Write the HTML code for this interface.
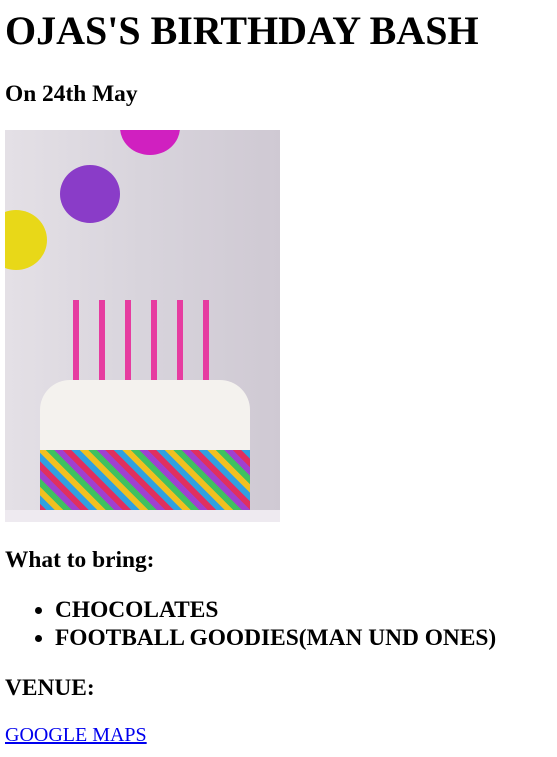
<html><head><style>
body{margin:0;font-family:"Liberation Serif",serif;background:#fff;position:relative;width:557px;height:757px;overflow:hidden}
.a{position:absolute;white-space:nowrap;font-weight:bold;margin:0}
h1.a{font-size:40px;left:5px;top:8px;line-height:46px}
.h3{font-size:23.4px;line-height:24px}
ul{position:absolute;left:0;top:596px;margin:0;padding-left:55px;font-size:23.4px;font-weight:bold;line-height:28px}
a{position:absolute;left:5px;top:723px;font-size:20px;color:#0000ee;line-height:24px}
.img{position:absolute;left:5px;top:130px;width:275px;height:392px;background:linear-gradient(90deg,#e4e0e6,#d8d4dc 50%,#cfc9d3);overflow:hidden}
.c{position:absolute;border-radius:50%}
</style></head><body>
<h1 class="a">OJAS'S BIRTHDAY BASH</h1>
<div class="a h3" style="left:5px;top:82px">On 24th May</div>
<div class="img">
<div class="c" style="left:115px;top:-30px;width:60px;height:55px;background:#d020c0"></div>
<div class="c" style="left:55px;top:35px;width:60px;height:58px;background:#8a3cc8"></div>
<div class="c" style="left:-20px;top:80px;width:62px;height:60px;background:#e8d818"></div>
<div style="position:absolute;left:60px;top:170px;width:160px;height:90px;background:repeating-linear-gradient(90deg,transparent 0 8px,#e63ca0 8px 14px,transparent 14px 26px)"></div>
<div style="position:absolute;left:35px;top:250px;width:210px;height:142px;background:#f4f2ee;border-radius:30px 30px 0 0"></div>
<div style="position:absolute;left:35px;top:320px;width:210px;height:62px;background:repeating-linear-gradient(45deg,#e03060 0 6px,#30a0e0 6px 12px,#f0c020 12px 18px,#40c060 18px 24px,#a040d0 24px 30px)"></div>
<div style="position:absolute;left:0;top:380px;width:275px;height:12px;background:#eeeaf0"></div>
</div>
<div class="a h3" style="left:5px;top:548px">What to bring:</div>
<ul><li>CHOCOLATES</li><li>FOOTBALL GOODIES(MAN UND ONES)</li></ul>
<div class="a h3" style="left:5px;top:676px">VENUE:</div>
<a href="#">GOOGLE MAPS</a>
</body></html>
